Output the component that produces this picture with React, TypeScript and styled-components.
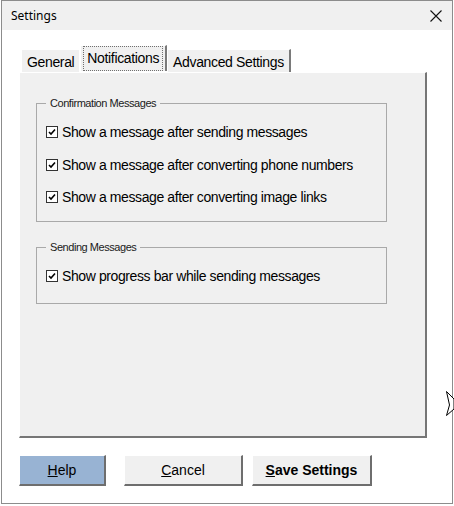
import React, { useState } from "react";
import styled, { createGlobalStyle } from "styled-components";

const GlobalStyle = createGlobalStyle`
  html, body {
    margin: 0;
    padding: 0;
    background: #ffffff;
  }
  body {
    font-family: "Liberation Sans", Arial, sans-serif;
  }
`;

const Screen = styled.div`
  position: relative;
  width: 454px;
  height: 506px;
  overflow: hidden;
  background: #ffffff;
`;

const Window = styled.div`
  box-sizing: border-box;
  margin-left: 1px;
  width: 452px;
  height: 504px;
  border: 1px solid #8c8c8c;
  background: #ffffff;
  display: flex;
  flex-direction: column;
`;

const TitleBar = styled.div`
  height: 29px;
  flex: 0 0 29px;
  background: #f0f0f0;
  display: flex;
  align-items: center;
  justify-content: space-between;
  padding: 0 9px 0 9px;
  font-family: "Noto Sans", "Open Sans", sans-serif;
  font-size: 12px;
  color: #000;
`;

const CloseButton = styled.button`
  border: 0;
  background: transparent;
  padding: 0;
  width: 14px;
  height: 14px;
  display: flex;
  align-items: center;
  justify-content: center;
  margin-top: 1px;
`;

const Body = styled.div`
  flex: 1;
  padding: 14px 0 0 17px;
  display: flex;
  flex-direction: column;
`;

const TabStrip = styled.div`
  display: flex;
  align-items: flex-end;
  height: 28px;
  padding-left: 2px;
`;

const Tab = styled.div<{ $active?: boolean; $last?: boolean }>`
  box-sizing: border-box;
  height: ${(p) => (p.$active ? 26 : 23)}px;
  padding: ${(p) => (p.$active ? "0 2px" : "1px 5px 0 5px")};
  margin: ${(p) => (p.$active ? "0 0 1px 1px" : "0")};
  background: #f0f0f0;
  border-top: 1px solid #ffffff;
  border-left: 1px solid #ffffff;
  border-right: ${(p) => (p.$active || p.$last ? "2px solid #7a7a7a" : "0")};
  display: flex;
  align-items: center;
  font-size: 14px;
  color: #000;
  letter-spacing: -0.35px;
`;

const FocusRect = styled.span`
  box-sizing: border-box;
  height: 100%;
  display: flex;
  align-items: center;
  padding: 0 3px 2px 3px;
  border: 1px dotted #6f6f6f;
`;

const Panel = styled.div`
  box-sizing: border-box;
  width: 408px;
  height: 366px;
  background: #f0f0f0;
  border-top: 1px solid #ffffff;
  border-left: 1px solid #ffffff;
  border-right: 2px solid #767676;
  border-bottom: 2px solid #767676;
  padding: 24px 0 0 16px;
  display: flex;
  flex-direction: column;
  gap: 19px;
`;

const Frame = styled.fieldset<{ $h: number }>`
  box-sizing: border-box;
  margin: 0;
  width: 351px;
  height: ${(p) => p.$h}px;
  border: 1px solid #a9a9a9;
  padding: 14px 0 0 9px;
  display: flex;
  flex-direction: column;
  gap: 14.5px;
`;

const Legend = styled.legend`
  margin-left: 0;
  padding: 0 4px;
  font-size: 11px;
  color: #1a1a1a;
  letter-spacing: -0.45px;
`;

const Row = styled.label`
  display: flex;
  align-items: center;
  gap: 4px;
  height: 18px;
  font-size: 14px;
  letter-spacing: -0.4px;
  color: #000;
  cursor: default;
`;

const Box = styled.span`
  box-sizing: border-box;
  width: 12px;
  height: 12px;
  border: 1px solid #333;
  background: #fff;
  display: flex;
  align-items: center;
  justify-content: center;
`;

const ButtonBar = styled.div`
  display: flex;
  margin-top: 17px;
  gap: 9px;
`;

const Button = styled.button<{ $w: number; $primary?: boolean; $bold?: boolean; $gapAfter?: number }>`
  box-sizing: border-box;
  width: ${(p) => p.$w}px;
  height: 31px;
  margin-right: ${(p) => p.$gapAfter ?? 0}px;
  background: ${(p) => (p.$primary ? "#98b3d3" : "#f0f0f0")};
  border: 0;
  border-top: 1px solid #ffffff;
  border-left: 1px solid #ffffff;
  border-right: 2px solid #6e6e6e;
  border-bottom: 2px solid #6e6e6e;
  font-family: "Liberation Sans", Arial, sans-serif;
  font-size: 14px;
  font-weight: ${(p) => (p.$bold ? 700 : 400)};
  color: #000;
  padding: 0;
  cursor: default;
`;

const Cursor = styled.svg`
  position: absolute;
  left: 446px;
  top: 391px;
`;

const Check = ({ on }: { on: boolean }) => (
  <Box>
    {on && (
      <svg width="8" height="8" viewBox="0 0 8 8">
        <path d="M1 4 L3 6 L7 1.5" stroke="#000" strokeWidth="1.6" fill="none" />
      </svg>
    )}
  </Box>
);

export default function App() {
  const [checks, setChecks] = useState([true, true, true, true]);
  const toggle = (i: number) =>
    setChecks((c) => c.map((v, j) => (j === i ? !v : v)));

  const confirmation = [
    "Show a message after sending messages",
    "Show a message after converting phone numbers",
    "Show a message after converting image links",
  ];

  return (
    <Screen>
      <GlobalStyle />
      <Window>
        <TitleBar>
          <span>Settings</span>
          <CloseButton aria-label="Close">
            <svg width="12" height="12" viewBox="0 0 12 12">
              <path d="M0.5 0.5 L11.5 11.5 M11.5 0.5 L0.5 11.5" stroke="#111" strokeWidth="1.1" />
            </svg>
          </CloseButton>
        </TitleBar>
        <Body>
          <TabStrip>
            <Tab>General</Tab>
            <Tab $active>
              <FocusRect>Notifications</FocusRect>
            </Tab>
            <Tab $last>Advanced Settings</Tab>
          </TabStrip>
          <Panel>
            <Frame $h={125}>
              <Legend>Confirmation Messages</Legend>
              {confirmation.map((text, i) => (
                <Row key={text} onClick={() => toggle(i)}>
                  <Check on={checks[i]} />
                  {text}
                </Row>
              ))}
            </Frame>
            <Frame $h={63}>
              <Legend>Sending Messages</Legend>
              <Row onClick={() => toggle(3)}>
                <Check on={checks[3]} />
                Show progress bar while sending messages
              </Row>
            </Frame>
          </Panel>
          <ButtonBar>
            <Button $w={87} $primary $gapAfter={9}>
              <u>H</u>elp
            </Button>
            <Button $w={119}>
              <u>C</u>ancel
            </Button>
            <Button $w={120} $bold>
              <u>S</u>ave Settings
            </Button>
          </ButtonBar>
        </Body>
      </Window>
      <Cursor width="10" height="26" viewBox="0 0 10 26">
        <path d="M0.5 0.5 L8 8 L8 18 L0.5 24.5 L3.5 14 Z" fill="#fff" stroke="#000" strokeWidth="1" />
      </Cursor>
    </Screen>
  );
}
